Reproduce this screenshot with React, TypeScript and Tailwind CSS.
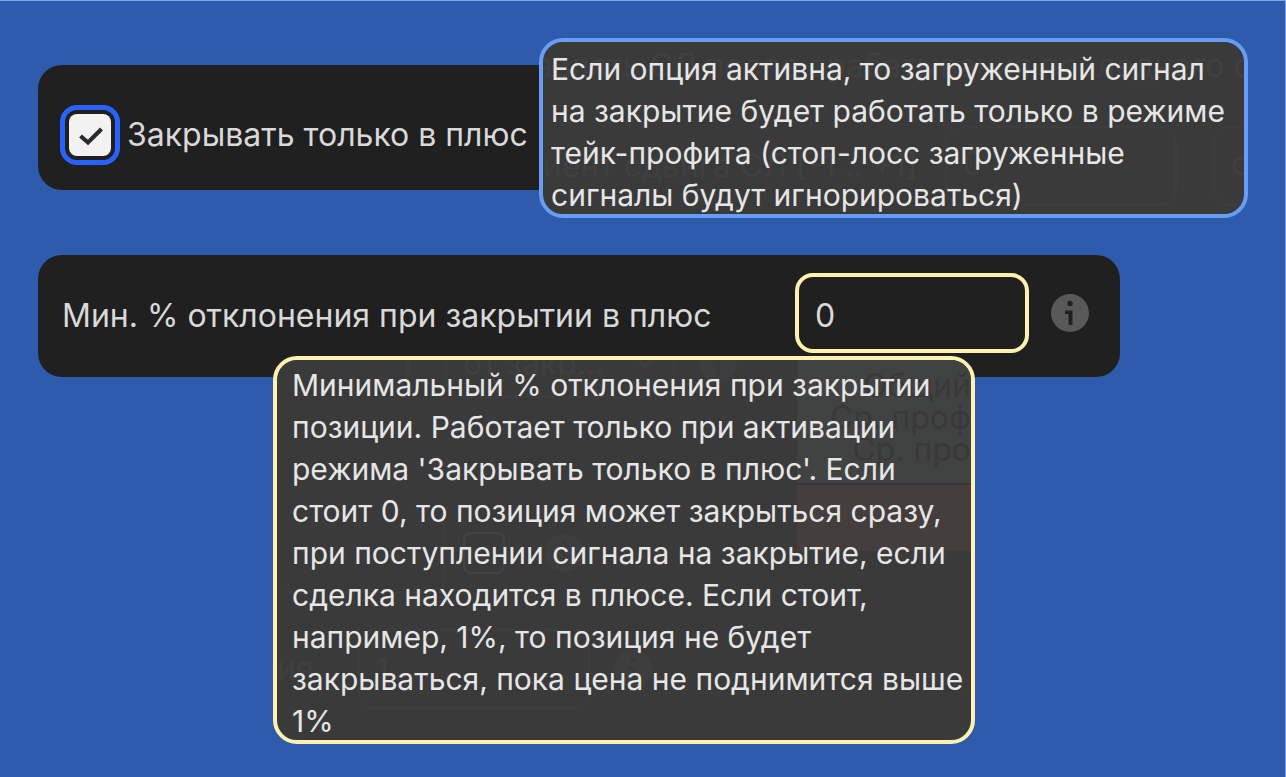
import { ChevronDown } from "lucide-react";

function InfoIcon({ className }: { className: string }) {
    return (
        <svg viewBox="0 0 38 38" className={className} aria-hidden="true">
            <path
                fill="currentColor"
                fillRule="evenodd"
                d="M19 0a19 19 0 1 1 0 38a19 19 0 1 1 0-38zM19 6.8a2.7 2.7 0 1 0 0 5.4a2.7 2.7 0 1 0 0-5.4zM14 16.5v3.5h3.5v11h4v-14.5z"
            />
        </svg>
    );
}

function CloseInProfit() {
    return (
        <section className="relative pt-[27px]">
            <div className="flex items-center w-[560px] h-[125px] px-[31px] pt-3.5 rounded-3xl bg-[#202020]">
                <div className="grid place-items-center">
                    <input
                        id="close-in-profit"
                        type="checkbox"
                        defaultChecked
                        aria-describedby="close-in-profit-tip"
                        className="col-start-1 row-start-1 appearance-none w-[42px] h-[42px] rounded-lg bg-[#f2f2f2] outline-[5px] outline-solid outline-offset-4 outline-[#2962ff]"
                    />
                    <svg viewBox="0 0 42 42" className="col-start-1 row-start-1 w-[42px] h-[42px] pointer-events-none" aria-hidden="true">
                        <path d="M11.5 22 19 28.5 32.5 15" fill="none" stroke="#2a2a2e" strokeWidth="4.2" />
                    </svg>
                </div>
                <label htmlFor="close-in-profit" className="ml-4 text-[32px] leading-10 whitespace-nowrap text-[#d9d9d9]">
                    Закрывать только в плюс
                </label>
            </div>

            <div
                id="close-in-profit-tip"
                role="tooltip"
                className="absolute top-0 left-[501px] right-0 h-[180px] overflow-hidden rounded-3xl border-4 border-[#669df6] bg-[#3a3a3a]"
            >
                {/* Form showing through the tooltip */}
                <div aria-hidden="true" className="absolute inset-0 text-[32px] leading-10 whitespace-nowrap text-[#404040]">
                    <p className="-ml-2 pt-1">авлять СЛ после срабатывания последнего о</p>
                    <div className="flex items-center mt-10">
                        <span className="shrink-0 w-[402px]">иент сдвига СЛ [-1 .. +1]</span>
                        <span className="shrink-0 w-[232px] h-20 p-4 rounded-2xl border-2 border-[#3d3d3d]">0</span>
                        <span className="shrink-0 w-[232px] h-20 ml-9 p-4 rounded-2xl border-2 border-[#3d3d3d]">о</span>
                    </div>
                </div>
                <p className="relative px-2 pt-1.5 text-[30px] leading-[42px] text-[#e6e6e6]">
                    Если опция активна, то загруженный сигнал на закрытие будет работать только в режиме тейк-профита (стоп-лосс загруженные сигналы будут игнорироваться)
                </p>
            </div>
        </section>
    );
}

function MinDeviation() {
    return (
        <section className="relative mt-[65px]">
            <div className="flex items-center max-w-[1082px] h-[122px] pl-6 pr-[31px] pb-1.5 rounded-3xl bg-[#202020]">
                <label htmlFor="min-deviation" className="flex-1 pt-1.5 text-[32px] leading-10 whitespace-nowrap text-[#d9d9d9]">
                    Мин. % отклонения при закрытии в плюс
                </label>
                <input
                    id="min-deviation"
                    type="text"
                    defaultValue="0"
                    aria-describedby="min-deviation-tip"
                    className="w-[234px] h-20 pl-4 pt-1 rounded-[18px] border-4 border-[#fff1b0] bg-[#202020] text-[32px] text-[#d9d9d9] outline-none"
                />
                <button type="button" aria-label="Подсказка" className="ml-[22px]">
                    <InfoIcon className="w-[38px] h-[38px] text-[#595959]" />
                </button>
            </div>

            <div
                id="min-deviation-tip"
                role="tooltip"
                className="absolute top-[101px] left-[235px] w-[702px] h-[388px] overflow-hidden rounded-3xl border-4 border-[#fff1b0] bg-[#3a3a3a]"
            >
                {/* Form showing through the tooltip */}
                <div aria-hidden="true" className="absolute inset-0 flex text-[32px] leading-10 whitespace-nowrap text-[#404040]">
                    <div className="w-[520px]">
                        <div className="flex h-[38px] pl-[130px]">
                            <div className="w-[38px] border-l-2 border-[#3d3d3d]" />
                            <div className="flex justify-between w-[230px] px-4 rounded-b-2xl border-2 border-t-0 border-[#3d3d3d]">
                                <span className="-mt-4">от закр...</span>
                                <ChevronDown className="w-6 h-6 -mt-2" />
                            </div>
                            <InfoIcon className="w-[38px] h-[38px] -mt-4 ml-6 text-[#3e3e3e]" />
                        </div>
                        <div className="flex items-center w-full h-20 mt-[115px]">
                            <div className="w-[168px] h-full border-r-2 border-b-2 border-[#3d3d3d]" />
                            <span className="w-[42px] h-[42px] ml-[18px] rounded-lg border-2 border-[#444444]" />
                            <InfoIcon className="w-[38px] h-[38px] ml-10 text-[#3e3e3e]" />
                        </div>
                        <div className="flex items-center mt-9">
                            <span className="w-[81px]">ия</span>
                            <span className="w-[232px] h-20 px-4 py-5 rounded-2xl border-2 border-[#3d3d3d]">1</span>
                            <InfoIcon className="w-[38px] h-[38px] ml-6 text-[#3e3e3e]" />
                        </div>
                    </div>
                    <div className="flex-1 text-[32px] leading-8">
                        <div className="h-[123px] pt-2.5 text-right bg-[#414343] text-[#393939]">
                            <p>Общий</p>
                            <p>Ср. проф</p>
                            <p>Ср. про</p>
                        </div>
                        <div className="h-[68px] pt-5 pl-5 border-t-2 border-[#363636] bg-[#453e3d] text-[#433d3c]">ация</div>
                    </div>
                </div>
                <p className="relative pl-[15px] pt-1 text-[30px] leading-[42px] text-[#e6e6e6]">
                    Минимальный % отклонения при закрытии позиции. Работает только при активации режима 'Закрывать только в плюс'. Если стоит 0, то позиция может закрыться сразу, при поступлении сигнала на закрытие, если сделка находится в плюсе. Если стоит, например, 1%, то позиция не будет закрываться, пока цена не поднимится выше 1%
                </p>
            </div>
        </section>
    );
}

export default function App() {
    return (
        <main className="min-h-screen pt-[37px] pl-[38px] pr-[37px] border-t border-r border-[#7fa6e4] bg-[#2f5bac] font-['Inter',sans-serif]">
            <CloseInProfit />
            <MinDeviation />
        </main>
    );
}
